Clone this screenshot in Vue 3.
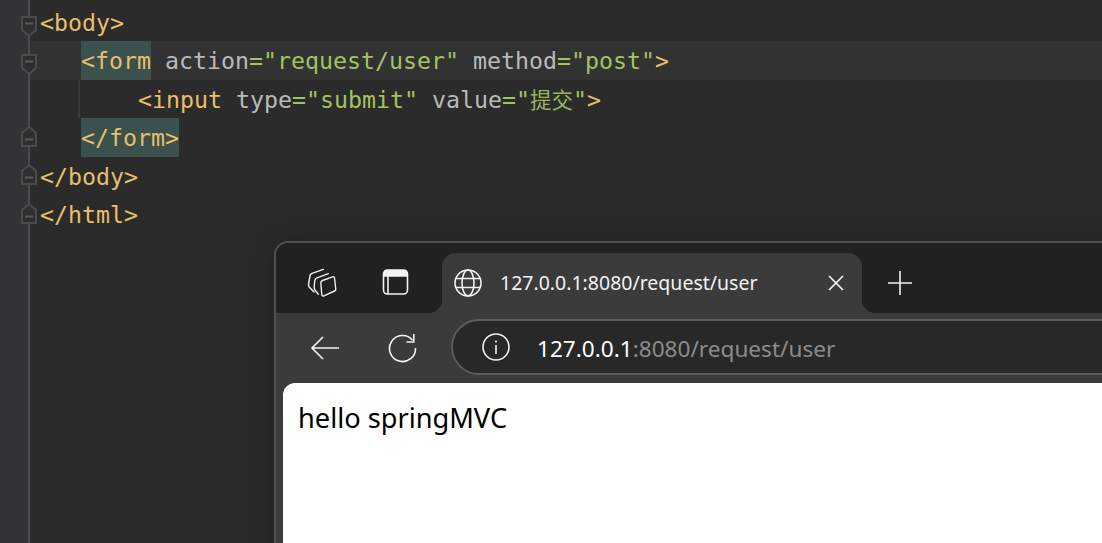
<script setup>
</script>

<template>
  <div class="screen">
    <div class="editor">
      <div class="gutter">
        <svg class="gutter-svg" width="40" height="543" viewBox="0 0 40 543">
          <path d="M29 0V543" stroke="#4a4b4c" stroke-width="2" fill="none" />
          <g v-for="y in [16, 54]" :key="y" :transform="`translate(0 ${y})`">
            <path d="M22 1h14v13l-7 6-7-6z" fill="#2d2e2f" stroke="#4b4b4b" stroke-width="2" />
            <path d="M25 7.500h8" stroke="#5a5a5a" stroke-width="2" />
          </g>
          <g v-for="y in [127, 165, 204]" :key="y" :transform="`translate(0 ${y})`">
            <path d="M22 19h14V6l-7-6-7 6z" fill="#2d2e2f" stroke="#4b4b4b" stroke-width="2" />
            <path d="M25 12.500h8" stroke="#5a5a5a" stroke-width="2" />
          </g>
        </svg>
      </div>
      <div class="code">
        <div class="row"><span class="tag">&lt;body&gt;</span></div>
        <div class="row active"><span class="tag match">&lt;form</span><span class="attr"> action</span><span class="str">="request/user"</span><span class="attr"> method</span><span class="str">="post"</span><span class="tag">&gt;</span></div>
        <div class="row indent2"><i class="guide"></i><span class="tag">&lt;input</span><span class="attr"> type</span><span class="str">="submit"</span><span class="attr"> value</span><span class="str">="<span class="cjk">提交</span>"</span><span class="tag">&gt;</span></div>
        <div class="row indent1"><span class="tag match">&lt;/form&gt;</span></div>
        <div class="row"><span class="tag">&lt;/body&gt;</span></div>
        <div class="row"><span class="tag">&lt;/html&gt;</span></div>
      </div>
    </div>

    <div class="browser">
      <div class="tabbar">
        <button class="tab-icon first" aria-label="Workspaces">
          <svg width="30" height="30" viewBox="0 0 30 30" fill="none" stroke="#f2f2f2" stroke-width="1.400" stroke-linejoin="round" stroke-linecap="round">
            <path d="M16.300 1.300 4.500 5.700Q3.200 6.300 3 8L1.500 16Q1.300 17.500 2.200 19L7 24" />
            <path d="M21.300 5.700 10 9.800Q8 10.500 7.800 12.500L7.200 19Q7 20.500 8 22L11.300 26.300" />
            <path d="M15.500 12.500 25.500 8.800Q27.300 8.200 27.500 10L28.800 21Q29 22.500 27.500 23L17 27.800Q15 28.500 14.800 26.500L13.800 15Q13.700 13.200 15.500 12.500Z" />
          </svg>
        </button>
        <button class="tab-icon second" aria-label="Vertical tabs">
          <svg width="28" height="28" viewBox="0 0 28 28" fill="none">
            <rect x="1.500" y="3" width="24" height="24" rx="4" stroke="#f2f2f2" stroke-width="1.600" />
            <path d="M1.500 7a4 4 0 0 1 4-4h16a4 4 0 0 1 4 4v2.700H1.500z" fill="#f2f2f2" />
            <path d="M6 9v18" stroke="#f2f2f2" stroke-width="1.600" />
          </svg>
        </button>
        <div class="tab">
          <svg class="globe" width="30" height="30" viewBox="0 0 30 30" fill="none" stroke="#f2f2f2" stroke-width="1.600">
            <circle cx="15" cy="15" r="13" />
            <ellipse cx="15" cy="15" rx="6" ry="13" />
            <path d="M3 10.500h24M3 19.500h24" />
          </svg>
          <span class="tab-title">127.0.0.1:8080/request/user</span>
          <svg class="close" width="16" height="16" viewBox="0 0 16 16" stroke="#f2f2f2" stroke-width="1.700" fill="none">
            <path d="M1 1l14 14M15 1 1 15" />
          </svg>
        </div>
        <svg class="plus" width="26" height="26" viewBox="0 0 26 26" stroke="#f2f2f2" stroke-width="1.600" fill="none">
          <path d="M13 1v24M1 13h24" />
        </svg>
      </div>
      <div class="toolbar">
        <svg class="back" width="30" height="26" viewBox="0 0 30 26" stroke="#f2f2f2" stroke-width="1.600" fill="none">
          <path d="M29 13H2M13 2 2 13l11 11" />
        </svg>
        <svg class="reload" width="30" height="30" viewBox="0 0 30 30" stroke="#f2f2f2" stroke-width="1.600" fill="none">
          <path d="M24.500 7.200A13 13 0 1 0 27.500 15" />
          <path d="M18.500 9h7.300V1" />
        </svg>
        <div class="address">
          <svg class="info" width="30" height="30" viewBox="0 0 30 30" fill="none">
            <circle cx="15" cy="15" r="13" stroke="#f2f2f2" stroke-width="1.600" />
            <path d="M15 13v9" stroke="#f2f2f2" stroke-width="1.600" />
            <circle cx="15" cy="9.500" r="1.100" fill="#f2f2f2" />
          </svg>
          <span class="url"><span class="host">127.0.0.1</span>:8080/request/user</span>
        </div>
      </div>
      <div class="page">hello springMVC</div>
    </div>
  </div>
</template>

<style>
html, body { margin: 0; background: #2b2b2b; overflow: hidden; }
</style>

<style scoped>
.screen { position: relative; width: 1102px; height: 543px; overflow: hidden; background: #2b2b2b; }
.editor { display: flex; height: 100%; }
.gutter { position: relative; z-index: 1; flex: 0 0 40px; background: linear-gradient(90deg, #313335 0 29px, transparent 29px); }
.gutter-svg { display: block; }
.code { flex: 1; min-width: 0; padding-top: 3px; font: 23.250px/40.400px "DejaVu Sans Mono", "Noto Sans CJK SC", monospace; white-space: pre; }
.row { position: relative; height: 38.400px; }
.active { background: #323232; margin-left: -10px; padding-left: 51px; }
.indent1 { padding-left: 41px; }
.indent2 { padding-left: 98px; }
.guide { position: absolute; left: 38px; top: 0; bottom: 0; width: 2px; background: #393939; }
.tag { color: #e8bf6a; }
.match { display: inline-block; background: #3b514d; height: 38.400px; }
.attr { color: #bababa; }
.str { color: #a5c261; }
.cjk { font-family: "Noto Sans CJK SC", sans-serif; font-size: 21.500px; line-height: 0; color: #9bb55c; }
.browser {
  position: absolute; left: 274px; top: 241px; width: 860px; height: 340px; box-sizing: border-box;
  background: #3b3b3b; border: 2px solid #505050; border-radius: 14px; overflow: hidden;
  box-shadow: 0 0 30px rgba(0, 0, 0, .25);
  font-family: "Noto Sans", "Open Sans", sans-serif; color: #f2f2f2;
}
.tabbar { display: flex; align-items: flex-start; height: 70px; background: #212121; position: relative; }
.tab-icon { padding: 0; border: 0; background: none; display: flex; margin-top: 25px; }
.tab-icon.first { margin-left: 31px; }
.tab-icon.second { margin-left: 45px; margin-top: 24px; }
.tab { position: relative; display: flex; align-items: center; margin-left: 32px; margin-top: 10px; width: 420px; height: 60px; background: #3b3b3b; border-radius: 14px 14px 0 0; }
.tab::before, .tab::after { content: ""; position: absolute; bottom: 0; width: 14px; height: 14px; }
.tab::before { left: -14px; background: radial-gradient(circle at 0 0, #212121 14px, #3b3b3b 14.500px); }
.tab::after { right: -14px; background: radial-gradient(circle at 100% 0, #212121 14px, #3b3b3b 14.500px); }
.globe { margin-left: 11px; flex: none; }
.tab-title { margin-left: 17px; margin-top: -2px; font-size: 19.500px; flex: 1; white-space: nowrap; }
.close { margin-right: 18px; flex: none; }
.plus { margin: 27px 0 0 25px; }
.toolbar { display: flex; align-items: center; height: 70px; position: relative; }
.back { margin-left: 34px; flex: none; }
.reload { margin-left: 48px; flex: none; }
.address { display: flex; align-items: center; margin-left: 33px; width: 700px; height: 56px; margin-top: -2px; box-sizing: border-box; background: #282828; border: 2px solid #5c5c5c; border-radius: 28px; }
.info { margin-left: 28px; flex: none; }
.url { margin-left: 26px; margin-top: 2px; font-size: 22.600px; color: #8c8c8c; white-space: nowrap; }
.host { color: #fff; }
.page { margin-left: 7px; height: 200px; padding: 15px 15px; background: #fff; border-radius: 12px 0 0 0; color: #000; font-size: 27.200px; line-height: 40px; }
</style>
